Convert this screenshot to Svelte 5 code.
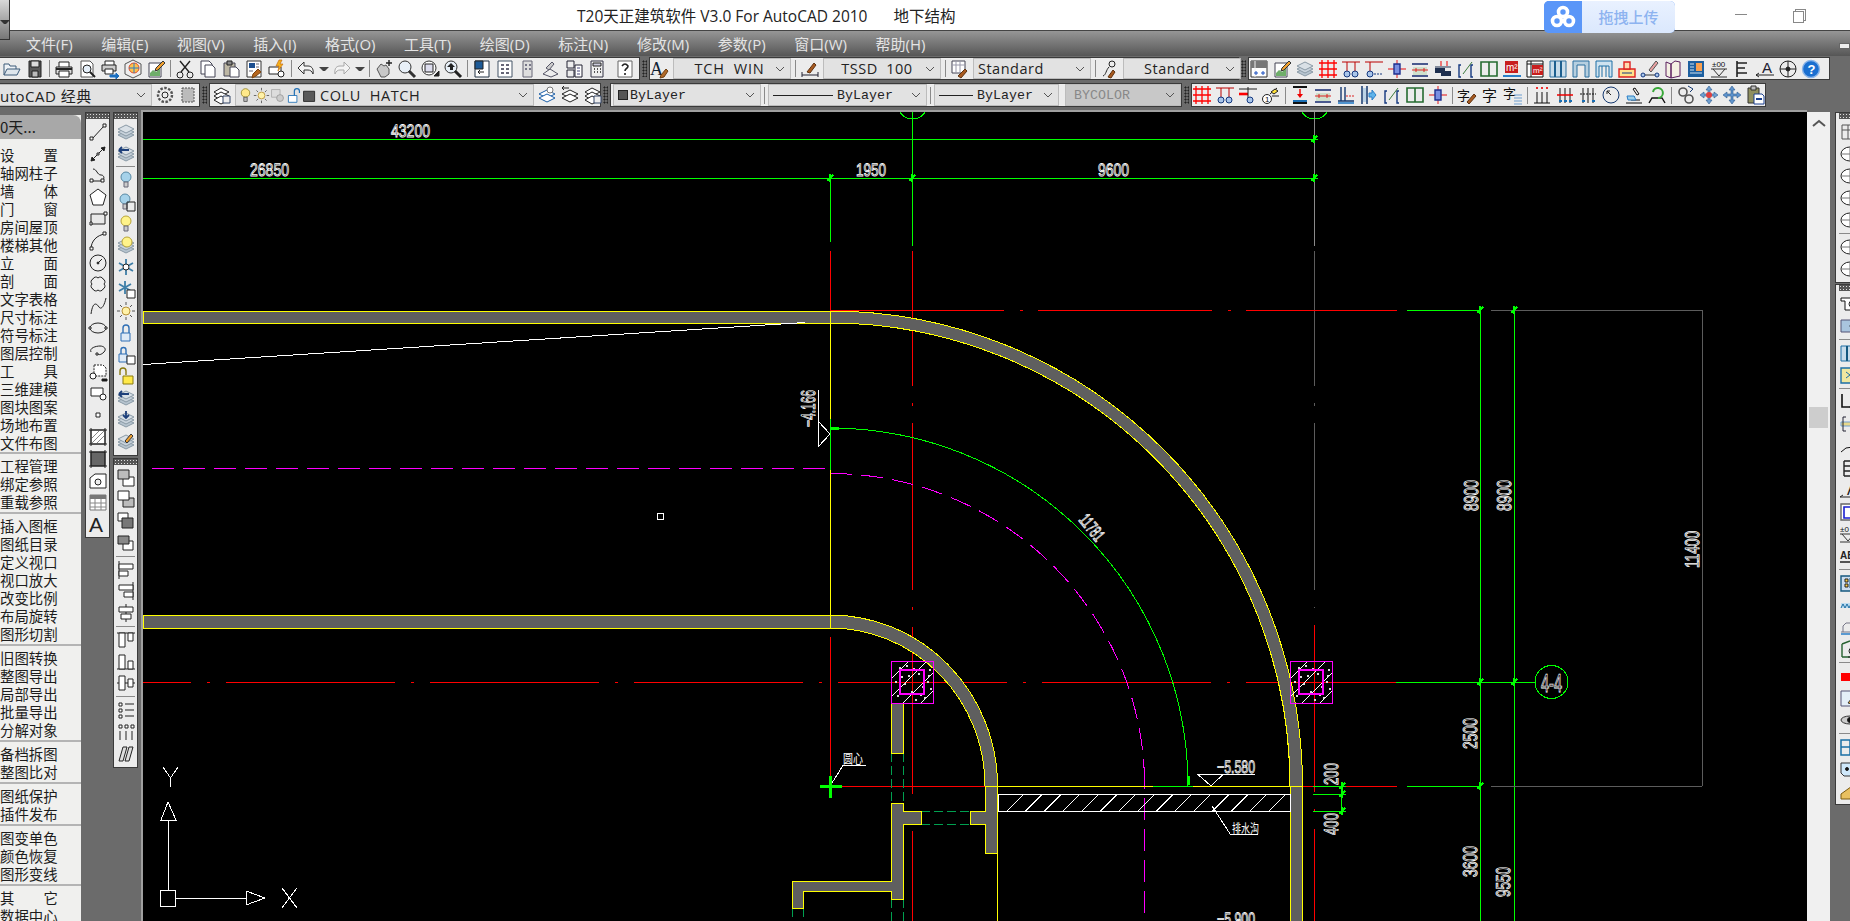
<script>
	const cjk = `font-family="Noto Sans CJK SC" stroke="none"`;
	const circ = (x, y, r = 3, s = '#14387f', f = '#a9c6ea') => `<circle cx="${x}" cy="${y}" r="${r}" stroke="${s}" fill="${f}"/>`;
	const layersIcon = `<path d="M2 13l8-4 8 4-8 4z" fill="#b7c4cf" stroke="#8a9aa6"/><path d="M2 10l8-4 8 4-8 4z" fill="#c9d3dc" stroke="#8a9aa6"/><path d="M2 7l8-4 8 4-8 4z" fill="#d9e0e6" stroke="#8a9aa6"/>`;
	const moveArrows = (c) => `<path d="M10 1l3 4h-2v4h4V7l4 3-4 3v-2h-4v4h2l-3 4-3-4h2v-4H5v2l-4-3 4-3v2h4V5H7z" fill="${c}" stroke="#2c5a8f" stroke-width=".6"/>`;

	const icons = {
		open: `<path d="M2 16V5h5l1 2h6v3" fill="#eef2f6" stroke="#3c5a78"/><path d="M2 16l3-6h13l-3 6z" fill="#dfe6ec" stroke="#3c5a78"/>`,
		save: `<path d="M4 2h12v16H4z" fill="#5a5a5a" stroke="#222"/><path d="M6 2h8v6H6z" fill="#dcdcdc"/><path d="M7 12h6v6H7z" fill="#bbb"/>`,
		print: `<path d="M5 8V3h10v5" fill="#fff"/><path d="M2 8h16v7H2z" fill="#ddd"/><path d="M5 12h10v6H5z" fill="#fff"/><path d="M2 10h16" stroke-width="2"/>`,
		preview: `<path d="M4 2h9l3 3v13H4z" fill="#fff" stroke="#555"/><circle cx="10" cy="10" r="4" fill="#e6f0fa"/><path d="M13 13l5 5" stroke-width="2"/>`,
		publish: `<path d="M5 6V2h9v4" fill="#fff"/><path d="M2 6h14v6H2z" fill="#ccc"/><path d="M5 10h8v5H5z" fill="#fff"/><path d="M10 16h6v-2l3 3-3 3v-2h-6z" fill="#1a6fc0" stroke="#1a6fc0"/>`,
		cube: `<path d="M10 1l8 4v10l-8 4-8-4V5z" fill="#eee" stroke="#555"/><circle cx="11" cy="9" r="5" fill="#ffc24a" stroke="#e04b2c"/><path d="M11 4v10M6 9h10" stroke="#2a7fc8"/>`,
		plot: `<path d="M3 4h12v14H3z" fill="#fff" stroke="#445"/><path d="M4 14l3-3 3 2 4-4v8H4z" fill="#6fae6a" stroke="none"/><path d="M10 9l7-7 2 2-7 7-3 1z" fill="#f0a030" stroke="#333"/>`,
		cut: `<circle cx="5" cy="16" r="3"/><circle cx="15" cy="16" r="3"/><path d="M6 13L15 2M14 13L5 2" stroke-width="1.4"/>`,
		copy: `<path d="M3 2h8l3 3v10H3z" fill="#fff" stroke="#445"/><path d="M7 6h7l3 3v9H7z" fill="#fff" stroke="#445"/>`,
		paste: `<path d="M3 4h11v13H3z" fill="#bdb7a4" stroke="#445"/><path d="M6 2h5v4H6z" fill="#888"/><path d="M9 8h6l3 3v7H9z" fill="#fff" stroke="#445"/>`,
		match: `<path d="M3 2h14v16H3z" fill="#fff" stroke="#333"/><path d="M5 4h6v5H5z" fill="#1d4f8f" stroke="none"/><path d="M12 5h3M12 8h3M5 12h4" stroke="#667"/><path d="M9 15l5-5 3 3-5 4-4 2z" fill="#b5651d" stroke="#7a4410"/>`,
		block: `<path d="M2 8h12v7H2z" fill="#fff"/><circle cx="14" cy="15" r="3" fill="#fff"/><path d="M12 1l-3 6h3l-1 5 5-7h-3l2-4z" fill="#f5b21b" stroke="#c46a10" stroke-width=".7"/>`,
		undo: `<path d="M8 3L2 9l6 6v-4h4c2 0 4 1 5 4 1-6-2-8-5-8H8z" fill="#f4f4f4" stroke="#333"/>`,
		redo: `<path d="M12 3l6 6-6 6v-4H8c-2 0-4 1-5 4-1-6 2-8 5-8h4z" fill="#f4f4f4" stroke="#a8a8a8"/>`,
		pan: `<path d="M3 10l4-5 3 2 2-1 3 4v5l-4 3H7z" fill="#c8c8c8" stroke="#555"/><path d="M15 1v6M12 4h6" stroke-width="1.4"/>`,
		zoom: `<circle cx="8" cy="8" r="6" fill="#e8f0f8" stroke="#333"/><path d="M12 12l6 6" stroke="#333" stroke-width="3"/>`,
		zoomw: `<circle cx="9" cy="9" r="7" fill="#fff" stroke="#333"/><path d="M5 5h8v8H5z" fill="#dde"/><path d="M14 17h5v-5z" fill="#222"/>`,
		zoomp: `<circle cx="8" cy="8" r="6" fill="#e8f0f8" stroke="#333"/><path d="M12 12l6 6" stroke-width="3"/><path d="M8 4L4 8h3v3h3V8h2z" fill="#222" stroke="none"/>`,
		pal1: `<path d="M3 2h14v16H3z" fill="#fff" stroke="#234"/><path d="M3 2h8v8H3z" fill="#1d5a96"/><path d="M12 13H6m2-2l-2 2 2 2"/>`,
		pal2: `<path d="M3 2h14v16H3z" fill="#fff" stroke="#456"/><path d="M6 5h3v2H6zM11 5h3v2h-3zM6 9h3v2H6zM11 9h3v2h-3zM6 13h3v2H6zM11 13h3v2h-3z" fill="#667" stroke="none"/>`,
		pal3: `<path d="M5 2h9v16H5z" fill="#ddd" stroke="#667"/><path d="M7 5h2v2H7zM11 5h2v2h-2zM7 9h2v2H7zM11 9h2v2h-2z" fill="#778" stroke="none"/>`,
		pal4: `<path d="M2 15l7-5 8 5-7 3z" fill="#eee" stroke="#556"/><path d="M5 9l6-6 2 2-5 6z" fill="#ccc" stroke="#556"/>`,
		pal5: `<path d="M3 2h7v7H3zM3 11h7v7H3z" fill="#eee" stroke="#223"/><path d="M11 6h7v12h-7z" fill="#fff" stroke="#223"/><path d="M13 9h3M13 12h3M13 15h3" stroke="#447"/>`,
		calc: `<path d="M4 2h12v16H4z" fill="#eee" stroke="#334"/><path d="M6 4h8v3H6z" fill="#ccd"/><path d="M7 10h1M10 10h1M13 10h1M7 13h1M10 13h1M13 13h1" stroke-width="1.6"/>`,
		help: `<path d="M3 2h14v16H3z" fill="#fff" stroke="#666"/><path d="M7 7q3-4 6 0c0 3-3 2-3 5M10 14v2" stroke-width="1.6"/>`,
		texta: `<text x="0" y="16" font-size="18" font-family="Liberation Serif" fill="#123" stroke="none">A</text><path d="M11 16l5-6 2 2-4 6-4 1z" fill="#b06a2a" stroke="#6e4012"/>`,
		dimbrush: `<path d="M2 13v5M18 13v5M2 16h16" stroke="#223"/><path d="M7 13l7-9 2 2-6 8z" fill="#a85a20" stroke="#5e3210"/>`,
		tablebrush: `<path d="M2 2h13v12H2z" fill="#fff" stroke="#445"/><path d="M2 6h13M6 2v12M10 2v12" stroke="#99a"/><path d="M8 17l7-7 2 2-6 7z" fill="#a85a20" stroke="#5e3210"/>`,
		leadbrush: `<circle cx="12" cy="5" r="3"/><path d="M3 17c3-1 3-6 6-9" /><path d="M8 18l5-7 2 2-4 6z" fill="#a85a20" stroke="#5e3210"/>`,
		gear: `<circle cx="10" cy="10" r="3"/><circle cx="10" cy="10" r="7" stroke="#555" stroke-width="2.4" stroke-dasharray="2.5 1.5" fill="none"/>`,
		workspace: `<path d="M4 3h12v14H4z" fill="#bbb" stroke="#555" stroke-dasharray="2 1"/>`,
		laymgr: `<path d="M2 7l7-4 8 4-8 4z" fill="#fff"/><path d="M2 11l7-4 8 4-8 4z" fill="#fff"/><path d="M2 15l7-4 8 4-8 4z" fill="#fff"/><path d="M11 11h7v7h-7z" fill="#eee" stroke="#346"/>`,
		bulb: `<circle cx="10" cy="7" r="5" fill="#ffe98a" stroke="#9a8a2a"/><path d="M8 12h4v5H8z" fill="#bbb" stroke="#555"/>`,
		sun: `<circle cx="10" cy="10" r="4" fill="#fff2a8" stroke="#b8923a"/><path d="M10 1v3M10 16v3M1 10h3M16 10h3M4 4l2 2M14 14l2 2M4 16l2-2M14 6l2-2" stroke="#555"/>`,
		vp: `<path d="M3 3h10v9H3z" fill="#ddd" stroke="#aaa"/><circle cx="13" cy="13" r="4" fill="#ccc" stroke="#999"/>`,
		lockopen: `<path d="M4 10h10v8H4z" fill="#fff" stroke="#1f6fb5"/><path d="M11 10V5a3 3 0 0 1 6 0v2" stroke="#1f6fb5" stroke-width="1.4"/>`,
		swatch: `<path d="M3 5h13v12H3z" fill="#5a5a5a" stroke="#222"/>`,
		laysel: `<path d="M2 9l8-4 8 4-8 4z" fill="#fff" stroke="#1a5ea8"/><path d="M2 13l8-4 8 4-8 4z" fill="#fff" stroke="#1a5ea8"/><circle cx="13" cy="5" r="3" fill="#fff" stroke="#777"/>`,
		layprev: `<path d="M2 9l8-4 8 4-8 4z" fill="#fff"/><path d="M2 13l8-4 8 4-8 4z" fill="#fff"/><path d="M2 3h7M4 1L2 3l2 2"/>`,
		layers: layersIcon,
		tax: `<path d="M2 2h16v16H2z" fill="#fff" stroke="#333"/><path d="M2 2h16v7H2z" fill="#777" stroke="none"/><path d="M6 2v16" stroke="#eee"/><path d="M5 14h4M7 12v4M12 14h4M14 12v4" stroke="#1a4fc0"/>`,
		grid: `<path d="M4 1v18M10 1v18M16 1v18M1 4h18M1 10h18M1 16h18" stroke="#f00" stroke-width="1.3"/>`,
		axis2: `<path d="M1 3h18M6 3v10M14 3v10" stroke="#b00"/>${circ(6, 15)}${circ(14, 15)}`,
		axis1: `<path d="M6 3v10M1 3h18" stroke="#b00"/>${circ(6, 15)}<path d="M10 15h9" stroke-dasharray="2 1" stroke="#14387f"/>`,
		col: `<path d="M10 1v18M1 10h18" stroke="#e6585a" stroke-width="1.4"/><path d="M7 5h6v10H7z" fill="#7a8fe0" stroke="#1e2f8f" stroke-width="1.4"/>`,
		beam: `<path d="M3 8h14v8H3z" fill="#cfe0cc" stroke="none"/><path d="M2 5h16M2 17h16" stroke="#14286f" stroke-width="1.4"/><path d="M2 11h16M6 9v4M14 9v4" stroke="#d22"/>`,
		ledge: `<path d="M2 9h10v3h6v5H8v-3H2z" fill="#1e2f4f" stroke="none"/><path d="M2 8h16" stroke="#1e2f4f"/><path d="M8 2v5M14 2v5" stroke="#e00"/>`,
		slash: `<path d="M5 6H3v12h2M17 6h-2v12h2" stroke="#14387f" stroke-width="1.4"/><path d="M7 15L16 3" stroke="#3c7a3c"/>`,
		win: `<path d="M2 3h16v14H2zM10 3v14" stroke="#256b30" stroke-width="1.6"/>`,
		m2: `<path d="M3 2h13v12H3z" fill="#c81e1e" stroke="none"/><text x="4" y="12" font-size="10" font-family="Liberation Sans" fill="#fff" stroke="none">m²</text><path d="M1 16h18v2H1z" fill="#2a7fc8" stroke="none"/>`,
		m2t: `<path d="M2 2h16v16H2z" fill="#fff" stroke="#111"/><path d="M2 5h16M6 2v16" stroke="#111"/><path d="M7 6h11v10H7z" fill="#c81e1e" stroke="none"/><text x="8" y="14" font-size="8" font-family="Liberation Sans" fill="#fff" stroke="none">m²</text>`,
		cols: `<path d="M2 2h16v16H2z" fill="#c8dcea" stroke="#2a6f9f"/><path d="M7 2v16M13 2v16" stroke="#1d5f8f" stroke-width="2"/>`,
		arch: `<path d="M2 18V2h16v16h-4V6H6v12z" fill="#b6cfe0" stroke="#2a6f9f"/>`,
		arch2: `<path d="M2 18V2h16v16h-3V7H5v11zM8 7v11M12 7v11" fill="#cfe3f0" stroke="#1d6fa5"/>`,
		stamp: `<path d="M2 10h16v8H2z" fill="#ffe28a" stroke="#d22" stroke-width="1.4"/><path d="M7 3h6v7H7z" fill="#ffd9b0" stroke="#d22" stroke-width="1.4"/><path d="M5 14h10" stroke="#14387f"/>`,
		brush2: `<path d="M9 11l7-9 2 2-7 9z" fill="#e8a0a0" stroke="#555"/><path d="M2 16h16" stroke="#333"/>${circ(3, 16, 2)}${circ(17, 16, 2)}`,
		book: `<path d="M3 3l5 2v14l-5-2zM8 5l4-3 5 1v14l-9 2z" fill="#f4f0e4" stroke="#5a1f5f"/>`,
		panel: `<path d="M2 2h16v16H2z" fill="#1d5f9f" stroke="none"/><path d="M10 4h6v8h-6z" fill="#f8a050" stroke="none"/><path d="M4 5h4M4 8h4M4 11h4M4 14h12" stroke="#cfe3f0"/>`,
		level: `<text x="3" y="8" font-size="8" font-family="Liberation Sans" fill="#111" stroke="none">±00</text><path d="M2 10h16M4 10l6 7 6-7M2 18h16" stroke="#333"/>`,
		stair: `<path d="M5 2v16M5 4h10M5 9h8M5 14h10" stroke="#222" stroke-width="1.6"/>`,
		leader: `<text x="7" y="14" font-size="15" font-family="Liberation Sans" fill="#223" stroke="none">A</text><path d="M1 16h18M1 16l3-2M1 16l3 2" stroke="#222"/>`,
		circle: `<circle cx="10" cy="10" r="8"/><path d="M10 2v16M2 10h16"/><circle cx="10" cy="10" r="2" fill="#222"/>`,
		info: `<circle cx="10" cy="10" r="8.5" fill="#1a6fd0" stroke="#8ab4e8" stroke-width="1.4"/><text x="6.5" y="15" font-size="13" font-weight="700" font-family="Liberation Sans" fill="#fff" stroke="none">?</text>`,
		axred: `<path d="M1 9h9" stroke="#f00" stroke-width="2.6"/><path d="M10 2v11M1 4h18" stroke="#222"/>${circ(12, 15)}`,
		num: `<circle cx="6" cy="14" r="4.5" fill="#fff"/><text x="4" y="17" font-size="8" font-family="Liberation Sans" fill="#111" stroke="none">1</text><path d="M9 9l7-6M11 11h7" stroke="#222"/><path d="M10 7l4-3 3 2-4 3z" fill="#ffe23a"/>`,
		floor: `<path d="M3 2h14M3 18h14" stroke="#111" stroke-width="2"/><path d="M3 16h14" stroke="#1a6fb5" stroke-width="2"/><path d="M10 4v6" stroke="#e00" stroke-width="1.4"/><path d="M7 9h6l-3 4z" fill="#e00" stroke="none"/>`,
		foot: `<path d="M5 2v14M9 2v14M2 16h16" stroke="#14386f" stroke-width="1.4"/><path d="M10 11h9" stroke="#d22" stroke-dasharray="2 1"/><path d="M2 18h16" stroke="#2a7fc8" stroke-width="1.6"/>`,
		wallmove: `<path d="M3 1v18M8 1v18" stroke="#14386f" stroke-width="1.5"/><path d="M4 3h3v14H4z" fill="#bcd3e6" stroke="none"/><path d="M10 8h3V5l4 5-4 5v-3h-3z" fill="#5fb4ea" stroke="#2a7fc8"/>`,
		ziBrush: `<text x="0" y="15" font-size="13" ${cjk} fill="#111">字</text><path d="M10 17l7-8 2 2-7 8z" fill="#a85a20" stroke="#5e3210"/>`,
		zi: `<text x="2" y="16" font-size="15" ${cjk} fill="#111">字</text>`,
		ziList: `<text x="0" y="13" font-size="13" ${cjk} fill="#111">字</text><path d="M11 10h8M11 13h8M11 16h8M11 19h8" stroke="#6f9fd0"/>`,
		dim1: `<path d="M2 18h16M5 7v11M10 7v11M15 7v11" stroke="#111"/><path d="M5 2v2M10 2v2M15 2v2" stroke="#e00" stroke-width="1.6"/>`,
		dim2: `<path d="M5 3v15M10 3v15M15 3v15" stroke="#111"/><path d="M2 10h16" stroke="#e00" stroke-width="1.5"/><path d="M4 16h3M9 16h3M14 16h3" stroke="#1a6fb5" stroke-width="2"/>`,
		dim3: `<path d="M5 3v15M10 3v15M15 3v15" stroke="#111"/><path d="M2 9h16" stroke="#111" stroke-dasharray="2 1"/><path d="M4 16h3M14 16h3" stroke="#1a6fb5" stroke-width="2"/>`,
		clock: `<circle cx="10" cy="10" r="8" stroke="#14386f"/><path d="M6 6l4 4M6 6h3M6 6v3"/>`,
		micro: `<path d="M2 18h16M7 15h9M11 3l4 6-2 1-4-6zM10 11v4" stroke="#111"/><path d="M3 11h7l2 4H4z" fill="#9fd0ea" stroke="#2a7fc8"/>`,
		rotate: `<path d="M2 18l3-5h10l3 5" stroke="#111" stroke-width="1.4"/><path d="M6 7a5 5 0 1 1 5 6" stroke="#38a838" stroke-width="2"/>`,
		chain: `<circle cx="7" cy="7" r="4" stroke="#555" stroke-width="1.6"/><circle cx="13" cy="14" r="4" stroke="#555" stroke-width="1.6"/><path d="M12 1l5 3-3 3" stroke="#14386f"/>`,
		moveRed: moveArrows('#6f9fd0') + `<circle cx="10" cy="10" r="3" fill="#e04040" stroke="none"/>`,
		move: moveArrows('#5f93cc'),
		clip: `<path d="M3 3h11v15H3z" fill="#8f8f5f" stroke="#333"/><path d="M6 1h5v4H6z" fill="#bbb" stroke="#333"/><path d="M9 9h8l2 2v8H9z" fill="#fff" stroke="#1a3f8f"/><path d="M11 14h6" stroke="#1a3f8f" stroke-width="2"/>`,
		// left column
		line: `<path d="M4 17L16 4"/><path d="M2 15h3v3H2zM15 2h3v3h-3z" fill="#fff"/>`,
		xline: `<path d="M3 17L17 3"/><path d="M3 17l1-4 3 3zM17 3l-4 1 3 3z" fill="#222"/><path d="M9 9h2v2H9z" fill="#fff"/>`,
		pline: `<path d="M5 16h7c5 0 5-6 1-6-4 0-4-6-8-6"/><path d="M2 14h3v3H2zM13 14h3v3h-3z" fill="#fff"/>`,
		poly: `<path d="M10 2l8 6-3 10H5L2 8z" fill="#fff"/>`,
		rect: `<path d="M3 5h14v10H3z" fill="#e8e8e8"/><path d="M2 13h2v3H2zM16 3h3v3h-3z" fill="#fff"/>`,
		arc: `<path d="M3 18C3 10 9 4 17 3"/><path d="M2 16h3v3H2zM15 1h3v3h-3z" fill="#fff"/>`,
		cir: `<circle cx="10" cy="10" r="8" fill="#eee"/><path d="M10 10l4-4"/><circle cx="10" cy="10" r="1" fill="#222"/>`,
		cloud: `<path d="M5 5a3 3 0 0 1 5-1 3 3 0 0 1 5 1 3 3 0 0 1 1 5 3 3 0 0 1-1 5 3 3 0 0 1-5 1 3 3 0 0 1-5-1 3 3 0 0 1-1-5 3 3 0 0 1 1-5z" fill="#eee"/>`,
		spline: `<path d="M3 18C5 4 9 8 11 11s5 0 7-9"/>`,
		ellipse: `<ellipse cx="10" cy="10" rx="8" ry="5"/><path d="M1 9h2v2H1zM17 9h2v2h-2z" fill="#fff"/>`,
		earc: `<path d="M3 12C1 8 8 6 12 6s7 3 4 6-5 3-7 2"/><path d="M8 13h2v2H8z" fill="#fff"/>`,
		insert: `<path d="M6 3h9l3 3v8H6z" fill="#fff" stroke-dasharray="2 1"/><circle cx="5" cy="14" r="3" fill="#fff"/><path d="M19 17h-5v2h5z" fill="#111"/>`,
		wblock: `<path d="M3 5h12v8H3z" fill="#fff"/><circle cx="15" cy="14" r="3" fill="#fff"/>`,
		point: `<path d="M8 8h4v4H8z" fill="#fff"/>`,
		hatch: `<path d="M3 3h14v14H3z" fill="#fff"/><path d="M3 12l9-9M3 17L17 3M8 17l9-9" stroke="#888"/><path d="M1 3h18M1 17h18M3 1v18M17 1v18"/>`,
		grad: `<path d="M3 3h14v14H3z" fill="#666"/><path d="M1 3h18M1 17h18M3 1v18M17 1v18"/>`,
		region: `<path d="M2 7l5-4h11v14H2z" fill="#fff"/><circle cx="10" cy="11" r="3" fill="#eee"/>`,
		table: `<path d="M2 3h16v15H2z" fill="#fff" stroke="#777"/><path d="M2 3h16v4H2z" fill="#777" stroke="none"/><path d="M2 11h16M2 15h16M7 7v11M13 7v11" stroke="#888"/>`,
		mtext: `<text x="1" y="18" font-size="21" font-family="Liberation Sans" fill="#222" stroke="none">A</text>`,
		bulbBlue: `<circle cx="10" cy="7" r="5" fill="#a6d2ea" stroke="#5a8aa5"/><path d="M8 12h4v5H8z" fill="#ccc" stroke="#667"/>`,
		bulbBox: `<circle cx="9" cy="7" r="5" fill="#a6d2ea" stroke="#5a8aa5"/><path d="M7 12h4v5H7z" fill="#ccc" stroke="#667"/><path d="M11 10h8v9h-8z"/>`,
		bulbYellow: `<circle cx="10" cy="7" r="5" fill="#fff38a" stroke="#b8a53a"/><path d="M8 12h4v5H8z" fill="#ccc" stroke="#667"/>`,
		bulbLayers: layersIcon + `<circle cx="11" cy="6" r="5" fill="#fff38a" stroke="#b8a53a"/>`,
		snow: `<path d="M10 2v16M3 6l14 8M3 14l14-8" stroke="#3f7fa8" stroke-width="1.8"/><circle cx="10" cy="10" r="3" fill="#fff"/>`,
		snowBox: `<path d="M9 2v13M3 5l12 7M3 12l12-7" stroke="#3f7fa8" stroke-width="1.8"/><path d="M11 11h8v8h-8z" fill="#fff"/>`,
		lockBlue: `<path d="M5 10h9v8H5z" fill="#dfeaf6" stroke="#2f6fb5"/><path d="M7 10V5a3 3 0 0 1 6 0v5" stroke="#2f6fb5" stroke-width="1.4"/>`,
		lockBox: `<path d="M3 9h8v8H3z" fill="#dfeaf6" stroke="#2f6fb5"/><path d="M5 9V5a2.500 2.500 0 0 1 5 0v4" stroke="#2f6fb5" stroke-width="1.4"/><path d="M11 11h8v8h-8z" fill="#fff"/>`,
		lockYellow: `<path d="M7 10h10v8H7z" fill="#ffe94a" stroke="#8a7a10"/><path d="M4 9V5a3 3 0 0 1 6 0v4" stroke="#8a7a10" stroke-width="1.4"/>`,
		layBack: layersIcon + `<path d="M3 6h10M3 6l3-3M3 6l3 3" stroke="#1d3f7a" stroke-width="1.8"/>`,
		layDown: layersIcon + `<path d="M10 1v7M7 5l3 3 3-3" stroke="#1d3f7a" stroke-width="1.8"/>`,
		layEdit: layersIcon + `<path d="M9 9l6-7 2 2-6 7z" fill="#f0a030" stroke="#333"/>`,
		front: `<path d="M7 9h11v9H7z" fill="#fff"/><path d="M2 2h11v9H2z" fill="#bbb"/>`,
		back: `<path d="M7 9h11v9H7z" fill="#bbb"/><path d="M2 2h11v9H2z" fill="#fff"/>`,
		above: `<path d="M2 2h10v8H2z" fill="#fff"/><path d="M6 7h11v10H6z" fill="#777"/>`,
		below: `<path d="M7 8h10v9H7z" fill="#fff"/><path d="M2 3h11v8H2z" fill="#888"/>`,
		alignL: `<path d="M3 1v18"/><path d="M3 4h14v5H3zM3 11h9v5H3z" fill="#fff"/>`,
		alignR: `<path d="M17 1v18"/><path d="M3 4h14v5H3zM8 11h9v5H8z" fill="#fff"/>`,
		alignC: `<path d="M10 1v18"/><path d="M3 4h14v5H3zM5 11h10v5H5z" fill="#fff"/>`,
		alignT: `<path d="M1 3h18"/><path d="M3 3h6v14H3zM12 3h5v8h-5z" fill="#fff"/>`,
		alignB: `<path d="M1 17h18"/><path d="M3 3h6v14H3zM12 9h5v8h-5z" fill="#fff"/>`,
		alignM: `<path d="M1 10h18"/><path d="M3 3h6v14H3zM12 6h5v8h-5z" fill="#fff"/>`,
		listV: `<path d="M3 3h3v3H3zM3 9h3v3H3zM3 15h3v3H3z" fill="#fff"/><path d="M9 4h9M9 10h9M9 16h9"/>`,
		listH: `<path d="M3 3h3v3H3zM9 3h3v3H9zM15 3h3v3h-3z" fill="#fff"/><path d="M4 9v9M10 9v9M16 9v9"/>`,
		xrefLines: `<path d="M3 17l4-14h4L7 17zM9 17l4-14h4l-4 14z" fill="#ddd"/>`,
		// right edge
		rbox: `<path d="M3 3h15v14H3zM3 8h15M9 3v14" stroke="#555"/>`,
		rsph: `<ellipse cx="11" cy="10" rx="9" ry="7" fill="#fff"/><path d="M2 10h18M11 3v14" stroke="#777"/>`,
		rhand: `<path d="M2 4h14v3h-4v9H6V7H2z" fill="#fff" stroke="#111"/><circle cx="13" cy="10" r="3"/>`,
		rblue: `<path d="M2 4h18v12H2z" fill="#a9c4de" stroke="#557"/><circle cx="14" cy="10" r="3" fill="#dfe8f0"/>`,
		rcols: `<path d="M2 3h18v15H2z" fill="#c8dcea" stroke="#1d6fa5"/><path d="M8 3v15" stroke="#14587f" stroke-width="2"/>`,
		rtrap: `<path d="M2 3h18v15H2z" fill="#f0e8a0" stroke="#1d6fa5" stroke-width="1.4"/><path d="M7 7l8 6M15 7l-8 6" stroke="#1d6fa5"/>`,
		rpipe: `<path d="M3 2v13h9" stroke="#111" stroke-width="1.6"/><circle cx="14" cy="15" r="3"/>`,
		rdoor: `<path d="M2 8h18v4H2z" fill="#e8d88a" stroke="#6f9fd0"/><path d="M7 3h-3v14h3" stroke="#223"/>`,
		rleader: `<path d="M2 16l5-4 7-1M14 3v8" stroke="#111"/>`,
		rrows: `<path d="M5 3h15M5 8h15M5 13h15M5 18h15M5 3v15" stroke="#222" stroke-width="1.4"/>`,
		rA: `<text x="8" y="15" font-size="16" font-family="Liberation Sans" fill="#222" stroke="none">A</text><path d="M1 17h18M1 17l3-2" stroke="#222"/>`,
		rframe: `<path d="M2 2h18v16H2z" fill="#fff" stroke="#666" stroke-width="1.4"/><path d="M5 5h13v11H5z" stroke="#1a1fd0" stroke-width="1.6"/>`,
		rlev: `<text x="1" y="8" font-size="8" font-family="Liberation Sans" fill="#111" stroke="none">±0</text><path d="M1 10h18M3 10l6 7 6-7M1 18h18" stroke="#333"/>`,
		rab: `<text x="1" y="13" font-size="10" font-weight="700" font-family="Liberation Sans" fill="#222" stroke="none">AB</text><path d="M1 16h18" stroke="#222" stroke-width="1.5"/>`,
		rpanel: `<path d="M2 3h18v15H2z" fill="#cde" stroke="#14587f" stroke-width="1.4"/><path d="M6 6h3v3H6zM6 11h3v3H6z" fill="#ffd040"/><path d="M11 5v10" stroke="#14587f"/>`,
		rwave: `<path d="M2 8h18v5H2z" fill="#bcdcf0" stroke="none"/><path d="M2 13l2-4 2 4 2-4 2 4 2-4 2 4 2-4 2 4" stroke="#1d6fa5"/>`,
		rsink: `<path d="M2 15h18M4 15V9l3-3h9v9" stroke="#778"/><path d="M2 17h18" stroke="#2a7fc8" stroke-width="1.5"/>`,
		rhouse: `<path d="M3 18V5M3 18h16M3 5l8-3" stroke="#25612f" stroke-width="1.4"/><circle cx="13" cy="12" r="3"/><path d="M9 18h8v-3"/>`,
		rred: `<path d="M2 7h10v8H2z" fill="#f00" stroke="none"/><path d="M12 6l6 4-6 4" stroke="#111"/>`,
		rpencil: `<path d="M2 3h18v15H2z" fill="#e4eff8" stroke="#557"/><path d="M9 15l7-9 3 2-6 8z" fill="#f0b030" stroke="#333"/>`,
		reye: `<ellipse cx="11" cy="10" rx="9" ry="4" fill="#ccc" stroke="#333"/><circle cx="11" cy="10" r="2.500" fill="#111"/>`,
		rwin4: `<path d="M2 3h18v15H2zM11 3v15M2 10h18" stroke="#1a6fa5" stroke-width="1.5"/>`,
		rtag: `<path d="M2 4h18v13H5l-3-3z" fill="#cfe8fa" stroke="#333"/><circle cx="8" cy="10" r="1.500" fill="#111"/>`,
		rruler: `<path d="M2 18V13l14-10 3 3-8 12z" fill="#e8c060" stroke="#7a5a10"/>`
	};

	const group1 = ['设|置', '轴网柱子', '墙|体', '门|窗', '房间屋顶', '楼梯其他', '立|面', '剖|面', '文字表格', '尺寸标注', '符号标注', '图层控制', '工|具', '三维建模', '图块图案', '场地布置', '文件布图'];
	const groups = [group1, ['工程管理', '绑定参照', '重载参照'], ['插入图框', '图纸目录', '定义视口', '视口放大', '改变比例', '布局旋转', '图形切割'], ['旧图转换', '整图导出', '局部导出', '批量导出', '分解对象'], ['备档拆图', '整图比对'], ['图纸保护', '插件发布'], ['图变单色', '颜色恢复', '图形变线'], ['其|它', '数据中心']];
	const menus = ['文件(F)', '编辑(E)', '视图(V)', '插入(I)', '格式(O)', '工具(T)', '绘图(D)', '标注(N)', '修改(M)', '参数(P)', '窗口(W)', '帮助(H)'];

	const row1a = ['open', 'save', '|', 'print', 'preview', 'publish', 'cube', 'plot', '|', 'cut', 'copy', 'paste', 'match', 'block', '|', 'undo', 'v', 'redo', 'v', '|', 'pan', 'zoom', 'zoomw', 'zoomp', '|', 'pal1', 'pal2', 'pal3', 'pal4', 'pal5', 'calc'];
	const row1c = ['tax', 'plot', 'layers', 'grid', 'axis2', 'axis1', 'col', 'beam', 'ledge', 'slash', 'win', 'm2', 'm2t', 'cols', 'arch', 'arch2', 'stamp', 'brush2', 'book', 'panel', 'level', 'stair', 'leader', 'circle', 'info'];
	const row2c = ['grid', 'axis2', 'axred', 'num', '|', 'floor', 'beam', 'foot', 'wallmove', 'slash', 'win', 'col', '|', 'ziBrush', 'zi', 'ziList', '|', 'dim1', 'dim2', 'dim3', 'clock', 'micro', 'rotate', '|', 'chain', 'moveRed', 'move', 'clip'];
	const col1 = ['line', 'xline', 'pline', 'poly', 'rect', 'arc', 'cir', 'cloud', 'spline', 'ellipse', 'earc', 'insert', 'wblock', 'point', 'hatch', 'grad', 'region', 'table', 'mtext'];
	const col2a = ['layers', 'layBack', '|', 'bulbBlue', 'bulbBox', 'bulbYellow', 'bulbLayers', 'snow', 'snowBox', 'sun', 'lockBlue', 'lockBox', 'lockYellow', 'layBack', 'layDown', 'layEdit'];
	const col2b = ['front', 'back', 'above', 'below', '|', 'alignL', 'alignR', 'alignC', '|', 'alignT', 'alignB', 'alignM', '|', 'listV', 'listH', 'xrefLines'];
	const edgeA = ['rbox', 'rsph', 'rsph', 'rsph', 'rsph', '|', 'rsph', 'rsph'];
	const edgeB = ['rhand', 'rblue', '|', 'rcols', 'rtrap', '|', 'rpipe', 'rdoor', 'rleader', 'rrows', 'rA', 'rframe', 'rlev', 'rab', '|', 'rpanel', 'rwave', 'rsink', 'rhouse', '|', 'rred', 'rpencil', 'reye', '|', 'rwin4', 'rtag', 'rruler'];

	// drawing data, in page coordinates
	const channelHatch = Array.from({ length: 15 }, (_, i) => 1007 + i * 18.7);
	const columns = [891, 1290];
	const colHatch = [-24, -6, 12, 30, 48];
	const colDots = [[8, 6], [13, 22], [20, 30], [27, 12], [33, 36], [38, 8], [6, 34], [17, 14], [31, 25], [24, 38], [10, 15], [36, 20], [39, 27], [4, 20], [15, 4], [29, 33], [22, 7], [37, 14]];
	const dimTexts = [
		{ t: '43200', x: 391, y: 137, w: 39 },
		{ t: '26850', x: 250, y: 176, w: 39 },
		{ t: '1950', x: 856, y: 176, w: 30 },
		{ t: '9600', x: 1098, y: 176, w: 31 },
		{ t: '−5.580', x: 1217, y: 773, w: 38 },
		{ t: '−5.900', x: 1217, y: 925, w: 38 }
	];
	const sideTexts = [
		{ t: '−4.166', x: 815, y: 427, w: 37 },
		{ t: '8900', x: 1478, y: 511, w: 31 },
		{ t: '8900', x: 1511, y: 511, w: 31 },
		{ t: '11400', x: 1699, y: 568, w: 37 },
		{ t: '2500', x: 1477, y: 749, w: 31 },
		{ t: '3600', x: 1477, y: 877, w: 31 },
		{ t: '9550', x: 1510, y: 897, w: 30 },
		{ t: '200', x: 1338, y: 785, w: 22 },
		{ t: '400', x: 1338, y: 835, w: 22 }
	];
	const ticks = [[1314, 139], [830, 178], [912, 178], [1314, 178], [1480, 310], [1514, 310], [1480, 682], [1514, 682], [1480, 786], [1342, 786], [1342, 794], [1342, 811]];
</script>

{#snippet icon(name)}
	<svg class="ico" viewBox="0 0 20 20" width="20" height="20">{@html icons[name]}</svg>
{/snippet}

{#snippet strip(list)}
	{#each list as name}
		{#if name === '|'}
			<i class="sep"></i>
		{:else if name === 'v'}
			<i class="drop"></i>
		{:else}
			{@render icon(name)}
		{/if}
	{/each}
{/snippet}

{#snippet chevron()}
	<svg class="chev" viewBox="0 0 10 6" width="10" height="6"><path d="M1 1l4 4 4-4" /></svg>
{/snippet}

<div class="app">
	<header class="titlebar">
		<div class="quick"><i class="drop"></i></div>
		<div class="title">T20天正建筑软件 V3.0 For AutoCAD 2010<span class="subtitle">地下结构</span></div>
		<div class="upload">
			<span class="cloud">
				<svg viewBox="0 0 26 24" width="26" height="24"><g fill="none" stroke="#fff" stroke-width="3.6"><circle cx="13" cy="7" r="4.500" /><circle cx="7" cy="16" r="4.500" /><circle cx="19" cy="16" r="4.500" /></g></svg>
			</span>
			<span class="upload-text">拖拽上传</span>
		</div>
		<i class="win-min"></i>
		<i class="win-max"></i>
	</header>

	<nav class="menubar">
		{#each menus as m}<span>{m}</span>{/each}
		<i class="menu-close"></i>
	</nav>

	<div class="row row1">
		<div class="tb tb-std">{@render strip(row1a)}<span class="helpbtn">{@render icon('help')}</span></div>
		<i class="grip"></i>
		<div class="tb tb-style">
			{@render icon('texta')}
			<div class="combo center wide first-style">TCH&nbsp; WIN{@render chevron()}</div>
			<i class="sep"></i>
			{@render icon('dimbrush')}
			<div class="combo center wide">TSSD&nbsp; 100{@render chevron()}</div>
			<i class="sep"></i>
			{@render icon('tablebrush')}
			<div class="combo wide">Standard{@render chevron()}</div>
			<i class="sep"></i>
			{@render icon('leadbrush')}
			<div class="combo center wide">Standard{@render chevron()}</div>
		</div>
		<i class="grip"></i>
		<div class="tb tb-tch">{@render strip(row1c)}</div>
	</div>

	<div class="row row2">
		<div class="tb tb-work">
			<div class="combo workspace"><span class="workspace-name">AutoCAD 经典</span>{@render chevron()}</div>
			{@render icon('gear')}
			{@render icon('workspace')}
		</div>
		<i class="grip"></i>
		<div class="tb tb-layer">
			{@render icon('laymgr')}
			<div class="combo layer">
				{@render icon('bulb')}{@render icon('sun')}{@render icon('vp')}{@render icon('lockopen')}{@render icon('swatch')}
				<span class="layer-name">COLU&nbsp; HATCH</span>{@render chevron()}
			</div>
			{@render icon('laysel')}{@render icon('layprev')}{@render icon('laymgr')}
		</div>
		<i class="grip"></i>
		<div class="tb tb-prop">
			<div class="combo mono bylayer1"><i class="swatch"></i>ByLayer{@render chevron()}</div>
			<i class="sep"></i>
			<div class="combo mono bylayer2"><i class="ltype"></i>ByLayer{@render chevron()}</div>
			<i class="sep"></i>
			<div class="combo mono bylayer3"><i class="ltype short"></i>ByLayer{@render chevron()}</div>
			<div class="combo mono off bycolor">BYCOLOR{@render chevron()}</div>
		</div>
		<i class="grip"></i>
		<div class="tb tb-tools">{@render strip(row2c)}</div>
	</div>

	<main class="main">
		<aside class="panel">
			<div class="panel-head">0天...</div>
			{#each groups as items, g}
				<ul class="group" class:first={g === 0}>
					{#each items as item}
						<li>{#each item.split('|') as part}<span>{part}</span>{/each}</li>
					{/each}
				</ul>
			{/each}
		</aside>

		<div class="vbars">
			<div class="vtb">
				<i class="vgrip"></i>
				{@render strip(col1)}
			</div>
		</div>
		<div class="vbars">
			<div class="vtb">
				<i class="vgrip"></i>
				{@render strip(col2a)}
			</div>
			<div class="vtb">
				<i class="vgrip"></i>
				{@render strip(col2b)}
			</div>
		</div>

		<div class="canvas">
			<svg class="cad" viewBox="143 112 1664 809" width="1664" height="809">
				<defs>
					<clipPath id="colclip0"><rect x="891" y="661" width="42" height="42" /></clipPath>
					<clipPath id="colclip1"><rect x="1290" y="661" width="42" height="42" /></clipPath>
				</defs>

				<!-- grid bubbles cut by the top of the viewport -->
				<circle class="g" cx="912.500" cy="104" r="15" />
				<circle class="g" cx="1314.500" cy="104" r="15" />

				<!-- axes -->
				<line class="r dash" x1="22" y1="682.500" x2="1396" y2="682.500" />
				<line class="g" x1="1396" y1="682.500" x2="1535" y2="682.500" />
				<line class="r" x1="830.500" y1="251" x2="830.500" y2="311" />
				<line class="r" x1="830.500" y1="637" x2="830.500" y2="786" />
				<line class="r vdash" x1="912.500" y1="251" x2="912.500" y2="921" />
				<line class="dim vdash" x1="1314.500" y1="251" x2="1314.500" y2="608" />
				<line class="r vdash2" x1="1314.500" y1="625" x2="1314.500" y2="921" />
				<line class="r" x1="842" y1="786.500" x2="985" y2="786.500" />
				<line class="r" x1="1302" y1="786.500" x2="1397" y2="786.500" />
				<line class="r hdash" x1="830" y1="310.500" x2="1397" y2="310.500" />

				<!-- dimensions -->
				<line class="g" x1="143" y1="139.500" x2="1318" y2="139.500" />
				<line class="g" x1="143" y1="178.500" x2="1318" y2="178.500" />
				<line class="g" x1="830.500" y1="178" x2="830.500" y2="242" />
				<line class="g" x1="912.500" y1="112" x2="912.500" y2="246" />
				<line class="lt" x1="1314.500" y1="112" x2="1314.500" y2="246" />
				<line class="g" x1="830.500" y1="419" x2="830.500" y2="470" />
				<line class="g" x1="1407" y1="310.500" x2="1480" y2="310.500" />
				<line class="dim" x1="1491" y1="310.500" x2="1702" y2="310.500" />
				<line class="g" x1="1480.500" y1="310" x2="1480.500" y2="921" />
				<line class="g" x1="1514.500" y1="310" x2="1514.500" y2="921" />
				<line class="dim" x1="1702.500" y1="310" x2="1702.500" y2="786" />
				<line class="g" x1="1407" y1="786.500" x2="1480" y2="786.500" />
				<line class="dim" x1="1491" y1="786.500" x2="1702" y2="786.500" />
				<line class="g" x1="1313" y1="786.500" x2="1346" y2="786.500" />
				<line class="g" x1="1313" y1="794.500" x2="1346" y2="794.500" />
				<line class="g" x1="1313" y1="811.500" x2="1346" y2="811.500" />
				<line class="g" x1="1341.500" y1="786" x2="1341.500" y2="811" />
				<path class="g" d="M830 428 A358 358 0 0 1 1188 786" />
				<path class="g arrow" d="M831 428h8M1188 776v9" />
				{#each ticks as [x, y]}
					<path class="g tick" d="M{x - 3} {y + 3}L{x + 3} {y - 3}M{x} {y - 4}V{y + 4}" />
				{/each}
				<circle class="g" cx="1551.500" cy="682" r="16.500" />

				<!-- dashed centre line of the channel -->
				<line class="m dashm" x1="152" y1="468.500" x2="830" y2="468.500" />
				<path class="m dashm" d="M830 473.500 A314.600 312.500 0 0 1 1144.600 786" />
				<line class="m dashm" x1="1144.500" y1="767" x2="1144.500" y2="921" />

				<!-- dark green hidden edges -->
				<path class="dg" d="M891.500 753V803M903.500 753V803M891.500 899V921M903.500 899V921M921 811.500H970M921 824.500H970M792.500 908V921M803.500 908V921" />

				<!-- walls -->
				<path class="wall" d="M143 311H830A472.500 475 0 0 1 1302.500 786V930H1290V786A460 463 0 0 0 830 323H143Z" />
				<path class="wall" d="M143 615H830A167.500 171 0 0 1 997.500 786V853H985V824H970V811H985V786A155 158 0 0 0 830 628H143Z" />
				<path class="wall" d="M891.500 703H903.500V753H891.500Z" />
				<path class="wall" d="M891.500 803H903.500V811H921V824H903.500V899H891.500V891.500H803.500V908H792.500V881H891.500Z" />

				<!-- columns -->
				{#each columns as cx, c}
					<g clip-path="url(#colclip{c})">
						{#each colHatch as k}
							<line class="w" x1={cx + k} y1="703" x2={cx + k + 42} y2="661" />
						{/each}
						{#each colDots as [dx, dy]}
							<rect class="dot" x={cx + dx} y={661 + dy} width="2" height="2" />
						{/each}
					</g>
					<rect class="m" x={cx + 0.5} y="661.500" width="42" height="42" />
					<rect class="m thick" x={cx + 9} y="670" width="24" height="24" />
				{/each}

				<!-- yellow and white on top -->
				<line class="y" x1="830.500" y1="311" x2="830.500" y2="419" />
				<line class="y" x1="830.500" y1="470" x2="830.500" y2="628" />
				<line class="y" x1="997.500" y1="853" x2="997.500" y2="921" />
				<line class="y" x1="985" y1="786.500" x2="1302" y2="786.500" />
				<line class="g" x1="1153" y1="786.500" x2="1193" y2="786.500" />
				<line class="w" x1="143" y1="364.500" x2="805" y2="322.500" />
				<rect class="w" x="998" y="794.500" width="292" height="17" />
				{#each channelHatch as x}
					<line class="w" x1={x} y1="811" x2={x + 17} y2="794" />
				{/each}

				<!-- leaders and level marks -->
				<path class="w" d="M818.500 390V421.500L830 434 818.500 446.500V421.500" />
				<path class="w" d="M1255 774.500H1198L1211 786 1223 774.500" />
				<path class="w" d="M1198 924 1211 936 1223 924" />
				<path class="w" d="M830 786L843 765.500H866" />
				<path class="w" d="M1212 806L1230.500 834.500H1258" />
				<path class="g cross" d="M820 786.500H842M830.500 776V798" />
				<rect class="w" x="657.500" y="513.500" width="6" height="6" />

				<!-- ucs icon -->
				<path class="w" d="M168.500 890V820M161 820L168 802 176 820ZM160.500 890.500H175.500V906.500H160.500ZM175.500 898.500H246M246 891V905L265 898Z" />
				<path class="w" d="M163 767L170.500 778 178 767M170.500 778V787M282 888L297 908M297 888L282 908" />

				{#each dimTexts as d}
					<text class="cad-text" x={d.x} y={d.y} textLength={d.w} lengthAdjust="spacingAndGlyphs">{d.t}</text>
				{/each}
				{#each sideTexts as d}
					<text class="cad-text side" transform="translate({d.x} {d.y}) rotate(-90)" textLength={d.w} lengthAdjust="spacingAndGlyphs">{d.t}</text>
				{/each}
				<text class="cad-text" transform="translate(1078 520) rotate(51)" textLength="29" lengthAdjust="spacingAndGlyphs">11781</text>
				<text class="cad-text big" x="1541" y="692" textLength="21" lengthAdjust="spacingAndGlyphs">4-4</text>
				<text class="cad-cjk" x="843" y="763" textLength="20" lengthAdjust="spacingAndGlyphs">圆心</text>
				<text class="cad-cjk" x="1232" y="833" textLength="27" lengthAdjust="spacingAndGlyphs">排水沟</text>
			</svg>
		</div>

		<div class="scroll">
			<svg viewBox="0 0 14 8" width="14" height="8"><path d="M1 7l6-5 6 5" /></svg>
			<div class="thumb"></div>
		</div>

		<div class="vbars edge">
			<div class="vtb">
				<i class="vgrip"></i>
				{@render strip(edgeA)}
			</div>
			<div class="vtb">
				<i class="vgrip"></i>
				{@render strip(edgeB)}
			</div>
		</div>
	</main>
</div>

<style>
	:global(body) {
		margin: 0;
		background: #6b6b6b;
		overflow: hidden;
	}
	.app {
		position: relative;
		width: 1850px;
		height: 921px;
		overflow: hidden;
		background: #6b6b6b;
		font-family: "Open Sans", "Noto Sans CJK SC", sans-serif;
	}
	i {
		display: block;
		flex: none;
	}

	/* title bar */
	.titlebar {
		display: flex;
		align-items: center;
		height: 30px;
		background: #fff;
		border-bottom: 1px solid #444;
		padding-left: 577px;
		font-size: 15.500px;
		color: #222;
		position: relative;
	}
	.title {
		white-space: nowrap;
	}
	.subtitle {
		margin-left: 26px;
	}
	.quick {
		position: absolute;
		left: 0;
		top: 0;
		width: 9px;
		height: 39px;
		background: linear-gradient(#d8d8d8, #777);
		border: 1px solid #333;
		border-left: 0;
		border-top: 0;
		z-index: 2;
	}
	.quick .drop {
		margin: 20px 0 0 0;
		border-top-color: #333;
	}
	.upload {
		position: absolute;
		left: 1544px;
		top: 1px;
		width: 131px;
		height: 32px;
		display: flex;
		border-radius: 5px;
		overflow: hidden;
		box-shadow: 0 0 0 1px #5a96f8 inset;
		z-index: 2;
	}
	.cloud {
		width: 38px;
		background: #5a96f8;
		display: flex;
		align-items: center;
		justify-content: center;
	}
	.upload-text {
		flex: 1;
		text-align: center;
		line-height: 32px;
		font-size: 15px;
		font-weight: 500;
		color: #8db3f0;
		background: linear-gradient(#e9f1ff, #dbe8fd);
	}
	.win-min {
		position: absolute;
		left: 1735px;
		top: 14px;
		width: 12px;
		height: 1px;
		background: #888;
	}
	.win-max {
		position: absolute;
		left: 1793px;
		top: 11px;
		width: 9px;
		height: 10px;
		border: 1px solid #888;
		box-shadow: 2px -2px 0 -1px #fff, 2px -2px 0 0 #888;
		background: #fff;
	}

	/* menu */
	.menubar {
		display: flex;
		align-items: center;
		gap: 28.600px;
		height: 25px;
		padding-left: 26px;
		background: linear-gradient(#969696, #565656);
		color: #e4e4e4;
		font-size: 15px;
		white-space: nowrap;
		position: relative;
	}
	.menu-close {
		position: absolute;
		right: 0;
		top: 12px;
		width: 9px;
		height: 4px;
		background: #eee;
		border: 1px solid #666;
	}

	/* horizontal toolbars */
	.row {
		display: flex;
		align-items: stretch;
		white-space: nowrap;
	}
	.row1 {
		height: 23px;
		margin-top: 1px;
	}
	.row2 {
		height: 24px;
		margin-top: 3px;
	}
	.tb {
		display: flex;
		align-items: center;
		gap: 3px;
		background: #ececec;
		border: 1px solid #3a3a3a;
		box-sizing: border-box;
		flex: none;
	}
	.grip {
		width: 5px;
		margin: 3px 2px;
		background-image: radial-gradient(#222 45%, transparent 50%);
		background-size: 3px 3px;
	}
	.sep {
		width: 1px;
		height: 17px;
		margin: 0 1px;
		background: #8a8a8a;
	}
	.drop {
		width: 10px;
		height: 0;
		position: relative;
		box-sizing: border-box;
		border-top: 4px solid #444;
		border-left: 4px solid transparent;
		border-right: 4px solid transparent;
		margin: 0;
	}
	.ico {
		flex: none;
		fill: none;
		stroke: #222;
		stroke-width: 1;
		stroke-linejoin: miter;
	}
	.tb-std {
		width: 640px;
		padding-left: 2px;
		border-left: 0;
	}
	.helpbtn {
		display: flex;
		margin-left: 5px;
	}
	.tb-style {
		width: 590px;
		padding-left: 0;
	}
	.tb-tch {
		width: 582px;
		margin-left: 0;
		padding-left: 0;
	}
	.tb-work {
		width: 200px;
		border-left: 0;
	}
	.tb-layer {
		width: 392px;
		padding-left: 2px;
	}
	.tb-prop {
		width: 572px;
		gap: 2px;
		padding-left: 3px;
	}
	.tb-tools {
		width: 575px;
		padding-left: 0;
	}
	.combo {
		position: relative;
		display: flex;
		align-items: center;
		flex: none;
		height: 100%;
		box-sizing: border-box;
		background: #e2e2e2;
		border: 1px solid #bcbcbc;
		font-size: 14.500px;
		letter-spacing: 0.5px;
		color: #222;
		padding-left: 4px;
		padding-right: 18px;
	}
	.combo.center {
		justify-content: center;
		padding-right: 14px;
	}
	.combo.first-style {
		padding-left: 9px;
		letter-spacing: 0.8px;
	}
	.wide {
		width: 118px;
	}
	.chev {
		position: absolute;
		right: 5px;
		top: 50%;
		margin-top: -3px;
		fill: none;
		stroke: #555;
		stroke-width: 1;
	}
	.workspace {
		width: 153px;
		padding-left: 0;
		margin-left: -1px;
		white-space: nowrap;
		overflow: hidden;
		font-size: 15px;
	}
	.workspace-name {
		margin-left: -10px;
	}
	.layer {
		width: 299px;
		gap: 0;
		padding-left: 1px;
	}
	.layer :global(svg.ico) {
		width: 17px;
		height: 17px;
		margin-right: -1px;
	}
	.layer-name {
		margin-left: 3px;
		letter-spacing: 0.6px;
	}
	.mono {
		font-family: "Liberation Mono", monospace;
		font-size: 13.300px;
		letter-spacing: 0;
	}
	.swatch {
		width: 8px;
		height: 8px;
		background: #555;
		border: 1px solid #222;
		margin-right: 2px;
	}
	.ltype {
		width: 60px;
		height: 1px;
		background: #222;
		margin-right: 4px;
	}
	.ltype.short {
		width: 34px;
	}
	.bylayer1 {
		width: 148px;
		margin-left: -1px;
	}
	.bylayer2 {
		width: 159px;
	}
	.bylayer3 {
		width: 125px;
	}
	.bycolor {
		width: 116px;
		margin-left: 4px;
		padding-left: 8px;
	}
	.off {
		background: #c8c8c8;
		color: #888;
	}

	/* main area */
	.main {
		display: flex;
		align-items: stretch;
		height: 811px;
		margin-top: 3px;
	}
	.panel {
		width: 81px;
		flex: none;
		padding-top: 5px;
		background: linear-gradient(#6b6b6b 5px, #f0f0ee 5px);
		overflow: hidden;
		font-size: 14.400px;
		line-height: 18px;
		color: #1c1c1c;
		font-family: "Noto Sans CJK SC", sans-serif;
	}
	.panel-head {
		height: 24px;
		line-height: 24px;
		background: #a8a8a8;
		border-radius: 0 8px 0 0;
		margin-bottom: 7px;
		font-size: 15px;
	}
	.group {
		list-style: none;
		margin: 0;
		padding: 3px 0 1px;
		border-top: 2px solid #b4b4b4;
	}
	.group.first {
		border-top: 0;
		padding: 0;
	}
	.group li {
		display: flex;
		justify-content: space-between;
		width: 58px;
		height: 18px;
		white-space: nowrap;
	}
	.vbars {
		display: flex;
		flex-direction: column;
		gap: 2px;
		flex: none;
		margin-left: 3px;
		width: 25px;
	}
	.vbars:first-of-type {
		margin-left: 4px;
	}
	.vtb {
		display: flex;
		flex-direction: column;
		align-items: center;
		gap: 1.800px;
		background: #ececec;
		border: 1px solid #3a3a3a;
		box-sizing: border-box;
		padding-bottom: 3px;
		flex: none;
		margin-top: 2px;
	}
	.vbars .vtb + .vtb {
		margin-top: 0;
	}
	.vgrip {
		align-self: stretch;
		height: 6px;
		margin-bottom: 1px;
		background-color: #555;
		background-image: radial-gradient(#ddd 40%, transparent 45%);
		background-size: 3px 3px;
	}
	.vtb .sep {
		width: 19px;
		height: 1px;
		margin: 1px 0;
	}
	.canvas {
		flex: none;
		margin-left: 3px;
		border-top: 2px solid #a0a0a0;
		border-left: 2px solid #a0a0a0;
		margin-top: 0;
		height: 809px;
		background: #000;
	}
	.cad {
		display: block;
		background: #000;
		shape-rendering: crispEdges;
		fill: none;
	}
	.cad line, .cad path, .cad rect, .cad circle {
		fill: none;
		stroke-width: 1;
	}
	.cad .g { stroke: #00ff00; }
	.cad .r { stroke: #ff0000; }
	.cad .y { stroke: #ffff00; }
	.cad .m { stroke: #ff00ff; }
	.cad .w { stroke: #ffffff; }
	.cad .dim { stroke: #5c5c5c; }
	.cad .lt { stroke: #8a8a8a; }
	.cad .dg { stroke: #00a050; stroke-dasharray: 9 4; }
	.cad .dash { stroke-dasharray: 169 16 3 16; }
	.cad .vdash { stroke-dasharray: 167 17 3 17; stroke-dashoffset: 32; }
	.cad .vdash2 { stroke-dasharray: 167 17 3 17; }
	.cad .hdash { stroke-dasharray: 174 16 3 15; }
	.cad .dashm { stroke-dasharray: 22 9; }
	.cad .wall {
		fill: #5f5f5f;
		stroke: #ffff00;
		stroke-width: 1;
	}
	.cad .thick {
		stroke-width: 2.500;
	}
	.cad .dot {
		fill: #ddd;
		stroke: none;
	}
	.cad .tick {
		stroke-width: 2;
	}
	.cad .arrow {
		stroke-width: 3;
	}
	.cad .cross {
		stroke-width: 3;
	}
	.cad-text {
		font-family: "Liberation Sans", sans-serif;
		font-size: 18px;
		fill: none;
		stroke: #fff;
		stroke-width: 0.9;
		text-rendering: geometricPrecision;
	}
	.cad-text.side {
		font-size: 20px;
	}
	.cad-text.big {
		font-size: 26px;
	}
	.cad-cjk {
		font-family: "Noto Sans CJK SC", sans-serif;
		font-size: 13px;
		fill: #fff;
	}
	.scroll {
		flex: none;
		width: 23px;
		background: #f0f0f0;
		margin-top: 2px;
		display: flex;
		flex-direction: column;
		align-items: center;
		padding-top: 7px;
		box-sizing: border-box;
	}
	.scroll svg {
		fill: none;
		stroke: #555;
		stroke-width: 2;
	}
	.thumb {
		width: 19px;
		height: 21px;
		margin-top: 280px;
		background: #cdcdcd;
	}
	.edge {
		margin-left: 5px;
		width: 30px;
		gap: 1px;
	}
	.edge .vtb {
		width: 30px;
		align-items: flex-start;
		padding-left: 3px;
		gap: 2px;
	}
	.edge .vtb .sep {
		width: 15px;
	}
</style>
